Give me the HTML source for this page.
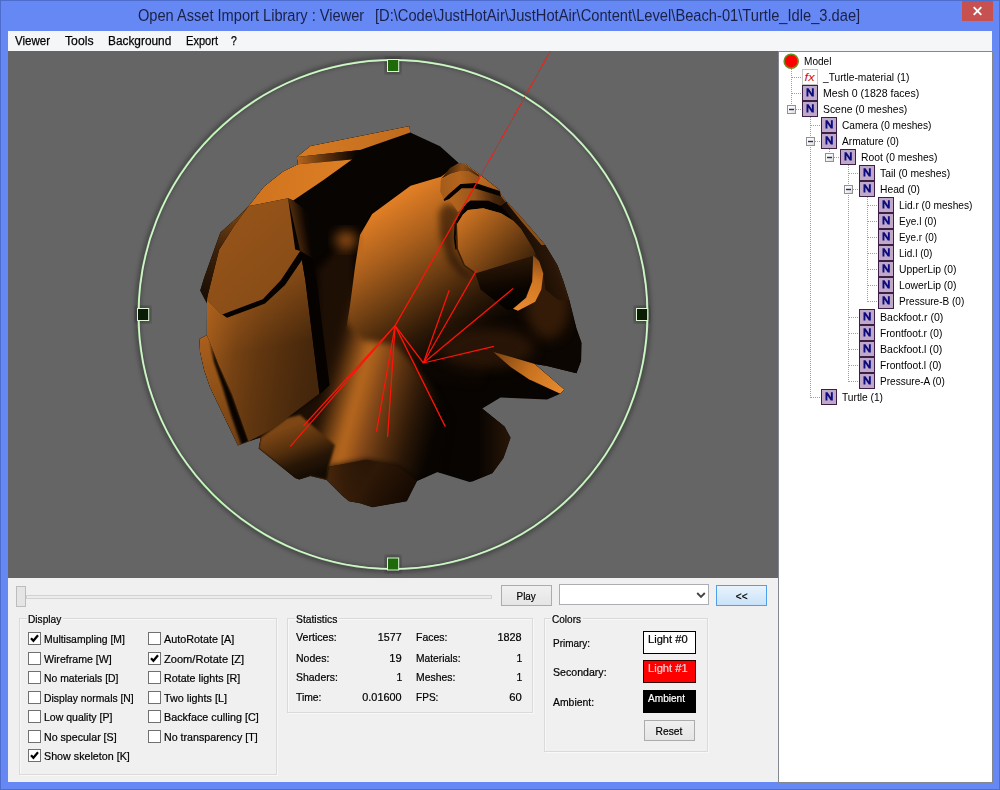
<!DOCTYPE html>
<html><head><meta charset="utf-8"><title>Open Asset Import Library : Viewer</title>
<style>
html,body{margin:0;padding:0;}
body{width:1000px;height:790px;position:relative;overflow:hidden;background:#6588f5;font-family:"Liberation Sans",sans-serif;font-size:11px;color:#000;}
.abs{position:absolute;}
#frame{left:0;top:0;width:998px;height:788px;border:1px solid #4d6dcc;}
.ttl{font-size:16px;line-height:20px;color:#1b2146;}
.mn{-webkit-text-stroke:0.25px;font-size:12.5px;line-height:14px;}
#close{left:962px;top:1px;width:31px;height:20px;background:#c75050;}
#client{left:8px;top:31px;width:984px;height:751px;background:#f0f0f0;}
#menubar{left:8px;top:31px;width:984px;height:20px;background:#f5f6f7;font-size:12px;}
#viewport{left:8px;top:51px;width:770px;height:527px;background:#696969;overflow:hidden;}
#tree{left:778px;top:51px;width:213px;height:730px;background:#fff;border:1px solid #828790;}
.t{position:absolute;white-space:nowrap;line-height:13px;}
.tt{transform:scaleX(0.948);transform-origin:0 0;}
.tp{transform:scaleX(0.95);transform-origin:0 0;}
.tpr{transform:scaleX(0.95);transform-origin:100% 0;}
.gb{box-sizing:border-box;border:1px solid #dadada;box-shadow:inset 1px 1px 0 rgba(255,255,255,.55), 1px 1px 0 rgba(255,255,255,.55);}
.cb{width:13px;height:13px;box-sizing:border-box;border:1px solid #707070;background:#fff;}
.btn{box-sizing:border-box;border:1px solid #acacac;background:linear-gradient(#f0f0f0,#e5e5e5);text-align:center;line-height:19px;}
.btn .tp{transform-origin:50% 0;}
.btn.def{border:1px solid #4ea0ee;background:linear-gradient(#e9f3fc,#c9e2f9);}
.pt{font-size:11.5px;line-height:13px;-webkit-text-stroke:0.22px;}

</style></head>
<body>
<div id="frame" class="abs"></div>
<div class="t ttl" style="left:138.3px;top:9.4px;transform-origin:0 0;transform:scaleX(0.9128)">Open Asset Import Library : Viewer</div>
<div class="t ttl" style="left:374.8px;top:9.4px;transform-origin:0 0;transform:scaleX(0.9179)">[D:\Code\JustHotAir\JustHotAir\Content\Level\Beach-01\Turtle_Idle_3.dae]</div>
<div id="close" class="abs"><svg width="31" height="20" viewBox="0 0 31 20"><path d="M11.7 6.2 L19.3 13.8 M19.3 6.2 L11.7 13.8" stroke="#fff" stroke-width="1.9" fill="none"/></svg></div>
<div id="client" class="abs"></div>
<div id="menubar" class="abs"></div>
<div class="t mn" style="left:15px;top:35px;transform-origin:0 0;transform:scaleX(0.9214)">Viewer</div>
<div class="t mn" style="left:64.5px;top:35px;transform-origin:0 0;transform:scaleX(0.9764)">Tools</div>
<div class="t mn" style="left:107.5px;top:35px;transform-origin:0 0;transform:scaleX(0.9488)">Background</div>
<div class="t mn" style="left:185.5px;top:35px;transform-origin:0 0;transform:scaleX(0.8854)">Export</div>
<div class="t mn" style="left:231.2px;top:35px;transform-origin:0 0;transform:scaleX(0.8342)">?</div>
<div id="viewport" class="abs" style="background:#656565"><svg class="abs" style="left:0;top:0" width="770" height="527" viewBox="8 51 770 527"><defs><clipPath id="sil"><polygon points="296.8,156.9 310.4,145.9 409.6,126.1 410.2,132.6 440.0,146.3 459.2,163.5 464.3,162.9 481.5,175.7 499.7,189.9 500.8,193.9 506.8,202.0 521.0,216.7 545.3,245.0 557.5,265.3 563.5,281.5 569.4,300.3 576.5,328.6 581.5,342.8 581.1,361.0 576.5,373.2 547.1,366.1 534.9,364.0 564.3,389.4 560.3,393.8 547.1,399.5 500.5,397.5 482.3,408.5 504.6,426.6 510.6,437.7 503.5,458.0 492.4,473.2 472.2,481.6 469.6,482.0 437.2,471.9 417.0,481.0 406.8,501.3 372.4,507.3 360.0,503.3 348.9,501.3 341.8,495.2 326.6,480.0 310.4,476.0 299.2,479.4 295.2,478.0 258.7,448.6 260.8,437.5 248.5,441.5 237.9,445.6 210.0,387.5 204.0,370.0 200.0,352.0 199.2,339.1 206.8,335.1 207.0,303.6 200.2,290.5 204.0,278.0 220.3,232.4 237.5,217.2 248.6,206.1 263.8,186.8 283.0,171.6 297.8,164.2"/></clipPath><filter id="b1" color-interpolation-filters="sRGB" x="-20%" y="-20%" width="140%" height="140%"><feGaussianBlur stdDeviation="1.3"/></filter><filter id="b3" color-interpolation-filters="sRGB" x="-20%" y="-20%" width="140%" height="140%"><feGaussianBlur stdDeviation="3"/></filter><filter id="b6" color-interpolation-filters="sRGB" x="-30%" y="-30%" width="160%" height="160%"><feGaussianBlur stdDeviation="6"/></filter><filter id="b05" color-interpolation-filters="sRGB" x="-5%" y="-5%" width="110%" height="110%"><feGaussianBlur stdDeviation="0.45"/></filter><filter id="glow" color-interpolation-filters="sRGB" x="-5%" y="-5%" width="110%" height="110%"><feGaussianBlur stdDeviation="2.2"/></filter><linearGradient id="gBody" gradientUnits="userSpaceOnUse" x1="330" y1="360" x2="445.7" y2="392.2"><stop offset="0" stop-color="#1e0f04"/><stop offset="0.06" stop-color="#2d1807"/><stop offset="0.21" stop-color="#8c4f18"/><stop offset="0.285" stop-color="#b7681f"/><stop offset="0.36" stop-color="#a55d1b"/><stop offset="0.45" stop-color="#86491a"/><stop offset="0.6" stop-color="#5a3210"/><stop offset="0.78" stop-color="#2e1908"/><stop offset="1" stop-color="#080401"/></linearGradient><linearGradient id="gHead" gradientUnits="userSpaceOnUse" x1="370" y1="212" x2="456" y2="347"><stop offset="0" stop-color="#e48026"/><stop offset="0.3" stop-color="#a85e1c"/><stop offset="0.55" stop-color="#6c3d12"/><stop offset="0.8" stop-color="#2e1907"/><stop offset="1" stop-color="#0c0602"/></linearGradient><clipPath id="headclip"><polygon points="300.0,420.0 346.0,330.0 350.0,305.6 355.0,267.0 360.0,235.0 372.2,214.0 410.6,185.8 441.0,176.7 459.2,163.5 464.3,162.9 481.5,175.7 499.7,189.9 506.8,202.0 521.0,216.7 545.3,245.0 557.5,265.3 563.5,281.5 569.4,300.3 576.5,328.6 581.5,342.8 581.1,361.0 576.5,373.2 600.0,420.0 600.0,520.0 300.0,520.0"/></clipPath><linearGradient id="gNeckSh" gradientUnits="userSpaceOnUse" x1="322" y1="300" x2="352" y2="300"><stop offset="0" stop-color="#050200"/><stop offset="1" stop-color="#050200"/></linearGradient><linearGradient id="gFoot1" gradientUnits="userSpaceOnUse" x1="340" y1="462" x2="400" y2="505"><stop offset="0" stop-color="#1e0f04"/><stop offset="0.45" stop-color="#2e1807"/><stop offset="1" stop-color="#160a02"/></linearGradient><linearGradient id="gFoot1b" gradientUnits="userSpaceOnUse" x1="326" y1="480" x2="380" y2="480"><stop offset="0" stop-color="#4a280c"/><stop offset="1" stop-color="rgba(40,20,6,0)"/></linearGradient><linearGradient id="gFoot0" gradientUnits="userSpaceOnUse" x1="280" y1="430" x2="300" y2="482"><stop offset="0" stop-color="#7d4615"/><stop offset="0.4" stop-color="#522e0d"/><stop offset="0.68" stop-color="#281606"/><stop offset="1" stop-color="#120a03"/></linearGradient><linearGradient id="gP1" gradientUnits="userSpaceOnUse" x1="300" y1="150" x2="410" y2="130"><stop offset="0" stop-color="#d67a22"/><stop offset="1" stop-color="#c06c1e"/></linearGradient><linearGradient id="gP1s" gradientUnits="userSpaceOnUse" x1="297" y1="160" x2="355" y2="156"><stop offset="0" stop-color="#b8661c"/><stop offset="0.5" stop-color="#5a300d"/><stop offset="1" stop-color="#0c0501"/></linearGradient><linearGradient id="gP2" gradientUnits="userSpaceOnUse" x1="260" y1="180" x2="340" y2="190"><stop offset="0" stop-color="#d0741f"/><stop offset="1" stop-color="#dc7e24"/></linearGradient><linearGradient id="gP3s" gradientUnits="userSpaceOnUse" x1="288" y1="225" x2="306" y2="222"><stop offset="0" stop-color="#6a3a10"/><stop offset="1" stop-color="#0c0501"/></linearGradient><linearGradient id="gP3" gradientUnits="userSpaceOnUse" x1="222" y1="215" x2="292" y2="290"><stop offset="0" stop-color="#965419"/><stop offset="1" stop-color="#884c17"/></linearGradient><linearGradient id="gP4" gradientUnits="userSpaceOnUse" x1="205" y1="330" x2="320" y2="347"><stop offset="0" stop-color="#a25b1b"/><stop offset="0.1" stop-color="#925218"/><stop offset="0.29" stop-color="#744113"/><stop offset="0.48" stop-color="#623710"/><stop offset="0.66" stop-color="#56300e"/><stop offset="0.87" stop-color="#49290c"/><stop offset="1" stop-color="#44260b"/></linearGradient><linearGradient id="gP4t" gradientUnits="userSpaceOnUse" x1="270" y1="265" x2="285" y2="345"><stop offset="0" stop-color="rgba(185,104,31,0.55)"/><stop offset="0.45" stop-color="rgba(185,104,31,0.3)"/><stop offset="1" stop-color="rgba(185,104,31,0)"/></linearGradient><linearGradient id="gP3l" gradientUnits="userSpaceOnUse" x1="230" y1="215" x2="206" y2="295"><stop offset="0" stop-color="#734013"/><stop offset="0.45" stop-color="#3c210a"/><stop offset="1" stop-color="#1c0f04"/></linearGradient><linearGradient id="gStrip" gradientUnits="userSpaceOnUse" x1="203" y1="340" x2="243" y2="444"><stop offset="0" stop-color="#a85e1c"/><stop offset="0.5" stop-color="#8c4f17"/><stop offset="1" stop-color="#703f13"/></linearGradient><clipPath id="stripclip"><polygon points="199.2,339.1 206.8,335.1 218.4,364.3 232,394.5 248.5,441.5 237.9,445.6 210,387.5 204,370 200,352"/></clipPath><linearGradient id="gBand0" gradientUnits="userSpaceOnUse" x1="445" y1="172" x2="482" y2="176"><stop offset="0" stop-color="#3a1f08"/><stop offset="0.45" stop-color="#8c4f18"/><stop offset="1" stop-color="#321b08"/></linearGradient><linearGradient id="gBrow1" gradientUnits="userSpaceOnUse" x1="441" y1="185" x2="480" y2="178"><stop offset="0" stop-color="#a55c1b"/><stop offset="0.5" stop-color="#b4651d"/><stop offset="1" stop-color="#8c4f18"/></linearGradient><linearGradient id="gBand1" gradientUnits="userSpaceOnUse" x1="452" y1="200" x2="512" y2="200"><stop offset="0" stop-color="#b4651d"/><stop offset="0.38" stop-color="#96541a"/><stop offset="0.7" stop-color="#46260b"/><stop offset="1" stop-color="#2a1607"/></linearGradient><linearGradient id="gRim" gradientUnits="userSpaceOnUse" x1="520" y1="250" x2="560" y2="235"><stop offset="0" stop-color="#140a03"/><stop offset="0.6" stop-color="#2a1607"/><stop offset="1" stop-color="#4a290c"/></linearGradient><linearGradient id="gEyeU" gradientUnits="userSpaceOnUse" x1="462" y1="215" x2="520" y2="275"><stop offset="0" stop-color="#cd7322"/><stop offset="0.45" stop-color="#8c4f17"/><stop offset="1" stop-color="#3a2009"/></linearGradient><linearGradient id="gEyeL" gradientUnits="userSpaceOnUse" x1="500" y1="262" x2="508" y2="310"><stop offset="0" stop-color="#2a1606"/><stop offset="0.6" stop-color="#0a0400"/><stop offset="1" stop-color="#030100"/></linearGradient><linearGradient id="gEyeR" gradientUnits="userSpaceOnUse" x1="540" y1="258" x2="525" y2="312"><stop offset="0" stop-color="#8a4a14"/><stop offset="0.4" stop-color="#d07622"/><stop offset="1" stop-color="#e88a30"/></linearGradient><linearGradient id="gBeak" gradientUnits="userSpaceOnUse" x1="495" y1="352" x2="562" y2="392"><stop offset="0" stop-color="#7a4212"/><stop offset="0.5" stop-color="#c8721f"/><stop offset="1" stop-color="#e88a30"/></linearGradient><linearGradient id="gFlip" gradientUnits="userSpaceOnUse" x1="478" y1="440" x2="512" y2="440"><stop offset="0" stop-color="#080401"/><stop offset="1" stop-color="#2a1607"/></linearGradient></defs><circle cx="393" cy="314.5" r="255.5" fill="none" stroke="#2c2c2c" stroke-opacity="0.55" stroke-width="5" filter="url(#glow)"/>
<rect x="385" y="57" width="16" height="17" fill="#303030" fill-opacity="0.6" filter="url(#glow)"/>
<rect x="385" y="555.5" width="16" height="17" fill="#303030" fill-opacity="0.6" filter="url(#glow)"/>
<rect x="135" y="306" width="16" height="17" fill="#303030" fill-opacity="0.6" filter="url(#glow)"/>
<rect x="634" y="306" width="16" height="17" fill="#303030" fill-opacity="0.6" filter="url(#glow)"/>
<circle cx="393" cy="314.5" r="254.5" fill="none" stroke="#b2e8a8" stroke-width="2.0"/>
<circle cx="393" cy="314.5" r="254.5" fill="none" stroke="#e2fbe0" stroke-width="0.8"/>
<rect x="387.5" y="59.5" width="11.2" height="12" fill="#1e6a0a" stroke="#dcf5d4" stroke-width="1"/>
<rect x="387.5" y="558.0" width="11.2" height="12" fill="#1e6a0a" stroke="#dcf5d4" stroke-width="1"/>
<rect x="137.5" y="308.5" width="11.2" height="12" fill="#0a1c05" stroke="#dcf5d4" stroke-width="1"/>
<rect x="636.5" y="308.5" width="11.2" height="12" fill="#0a1c05" stroke="#dcf5d4" stroke-width="1"/>
<g filter="url(#b05)">
<polygon points="296.8,156.9 310.4,145.9 409.6,126.1 410.2,132.6 440.0,146.3 459.2,163.5 464.3,162.9 481.5,175.7 499.7,189.9 500.8,193.9 506.8,202.0 521.0,216.7 545.3,245.0 557.5,265.3 563.5,281.5 569.4,300.3 576.5,328.6 581.5,342.8 581.1,361.0 576.5,373.2 547.1,366.1 534.9,364.0 564.3,389.4 560.3,393.8 547.1,399.5 500.5,397.5 482.3,408.5 504.6,426.6 510.6,437.7 503.5,458.0 492.4,473.2 472.2,481.6 469.6,482.0 437.2,471.9 417.0,481.0 406.8,501.3 372.4,507.3 360.0,503.3 348.9,501.3 341.8,495.2 326.6,480.0 310.4,476.0 299.2,479.4 295.2,478.0 258.7,448.6 260.8,437.5 248.5,441.5 237.9,445.6 210.0,387.5 204.0,370.0 200.0,352.0 199.2,339.1 206.8,335.1 207.0,303.6 200.2,290.5 204.0,278.0 220.3,232.4 237.5,217.2 248.6,206.1 263.8,186.8 283.0,171.6 297.8,164.2" fill="#080401" />
<g clip-path="url(#sil)">
<g filter="url(#b3)">
<polygon points="318.0,270.0 352.0,235.0 356.0,320.0 395.0,326.0 450.0,420.0 440.0,475.0 417.0,483.0 398.7,466.8 366.3,459.7 340.0,464.8 328.6,466.8 326.6,482.0 310.4,478.0 299.2,481.0 293.0,480.0 256.0,449.0 258.0,436.0 287.0,418.0 319.5,393.4" fill="url(#gBody)" />
</g>
<g clip-path="url(#headclip)"><g filter="url(#b3)">
<polygon points="340.0,300.0 340.0,235.0 372.2,200.0 410.6,175.0 441.0,165.0 459.2,150.0 500.0,160.0 600.0,250.0 600.0,390.0 493.0,352.0 480.0,385.0 430.0,380.0 395.0,345.0 362.0,340.0 345.0,322.0" fill="url(#gHead)" />
</g></g>
<ellipse cx="346" cy="240" rx="11" ry="9" fill="#8a4a14" filter="url(#b6)"/>
<polygon points="340.0,464.8 366.3,459.7 398.7,466.8 417.0,481.0 406.8,501.3 372.4,507.3 360.0,503.3 348.9,501.3 341.8,495.2 326.6,480.0 328.6,466.8" fill="url(#gFoot1)" />
<polygon points="340.0,464.8 366.3,459.7 398.7,466.8 417.0,481.0 406.8,501.3 372.4,507.3 360.0,503.3 348.9,501.3 341.8,495.2 326.6,480.0 328.6,466.8" fill="url(#gFoot1b)" />
<g filter="url(#b1)">
<polygon points="260.8,437.5 258.7,448.6 295.2,478.0 299.2,479.4 310.4,476.0 326.6,480.0 328.6,466.8 335.0,445.0 300.0,415.0 287.0,418.0" fill="url(#gFoot0)" />
</g>
<polygon points="296.8,156.9 310.4,145.9 409.6,126.1 410.2,132.6 360.0,150.0" fill="url(#gP1)" />
<polygon points="296.8,156.9 360.0,150.0 352.0,159.5 297.8,164.2" fill="url(#gP1s)" />
<polygon points="297.8,164.2 352.0,159.5 323.5,180.0 293.2,200.5 288.1,198.2 248.6,206.1 263.8,186.8 283.0,171.6" fill="url(#gP2)" />
<polygon points="288.1,198.2 293.2,200.5 308.0,212.0 312.0,260.0 300.3,251.0" fill="url(#gP3s)" />
<polygon points="248.6,206.1 288.1,198.2 295.2,249.6 300.3,251.0 281.0,281.0 262.8,300.0 222.3,315.0 207.0,300.0 207.5,296.3 211.8,278.9 219.1,249.7 233.7,226.5" fill="url(#gP3)" />
<polygon points="207.0,300.0 222.3,315.0 262.8,300.0 281.0,281.0 300.3,251.0 305.3,280.0 319.5,393.4 287.0,418.0 269.9,430.4 248.5,441.5 232.0,394.5 218.4,364.3 206.8,335.1" fill="url(#gP4)" />
<polygon points="207.0,300.0 222.3,315.0 262.8,300.0 281.0,281.0 300.3,251.0 305.3,280.0 319.5,393.4 287.0,418.0 269.9,430.4 248.5,441.5 232.0,394.5 218.4,364.3 206.8,335.1" fill="url(#gP4t)" />
<polygon points="222.3,314.4 262.8,299.2 281.0,280.0 300.3,250.9 304.0,257.0 285.0,285.0 265.0,303.5 227.0,317.8" fill="#050200" />
<polygon points="248.6,206.1 237.5,217.2 220.3,232.4 204.0,278.0 200.2,290.5 206.0,303.6 207.5,296.3 211.8,278.9 219.1,249.7 233.7,226.5" fill="url(#gP3l)" />
<polygon points="199.2,339.1 206.8,335.1 218.4,364.3 232.0,394.5 248.5,441.5 237.9,445.6 210.0,387.5 204.0,370.0 200.0,352.0" fill="url(#gStrip)" />
<g clip-path="url(#stripclip)"><g filter="url(#b1)">
<polygon points="210.0,341.0 218.4,364.3 232.0,394.5 249.0,441.5 241.5,445.0 231.0,415.0 222.5,387.0 214.0,362.0" fill="#0a0400" />
</g></g>
<polygon points="305.3,280.0 300.3,251.0 312.0,258.0 316.5,280.0 329.6,385.3 319.5,394.4" fill="#050200" />
<polygon points="446,203 462,211 455,226 454,250 463,268 474,277 462,276 449,262 440,236 439,212" fill="#140902" fill-opacity="0.55" filter="url(#b3)"/>
<ellipse cx="548" cy="305" rx="22" ry="34" fill="#3e2109" fill-opacity="0.8" filter="url(#b6)"/>
<ellipse cx="486" cy="348" rx="48" ry="20" fill="#2e1807" fill-opacity="0.85" filter="url(#b6)"/>
<polygon points="441.0,179.0 450.0,168.0 459.2,162.7 463.0,162.7 479.4,175.3 479.4,177.2 468.0,170.9 461.0,170.9 450.3,174.0" fill="url(#gBand0)" />
<polygon points="440.8,179.7 450.3,174.0 461.0,170.9 468.0,170.9 479.4,177.2 475.6,182.9 460.4,183.5 448.4,194.3 444.0,199.4 440.2,191.8" fill="url(#gBrow1)" />
<polygon points="449.0,198.7 461.7,188.0 474.4,188.0 501.0,196.2 506.0,202.5 513.6,215.8 501.0,205.7 488.3,200.6 470.6,200.6 466.8,203.2 458.0,212.0" fill="url(#gBand1)" />
<polygon points="443.6,199.6 448.4,194.6 460.4,183.9 475.6,183.0 499.7,190.9 501.0,196.4 474.4,188.3 461.7,188.3 449.2,199.0 444.2,201.0" fill="#050200" />
<polygon points="466.8,203.2 470.6,200.6 488.3,200.6 501.0,205.7 506.8,202.0 521.0,216.7 523.0,230.0 513.6,220.9 501.0,213.3 483.2,208.2 468.0,210.1 463.0,214.6 456.6,224.7 455.6,238.6 457.2,249.1 455.4,249.5 453.8,238.0 454.6,224.0 460.0,212.0" fill="#050200" />
<polygon points="501.0,205.7 506.8,202.0 521.0,216.7 545.3,245.0 557.5,265.3 563.5,281.5 569.4,300.3 558.0,300.0 545.3,289.6 543.3,273.4 539.2,261.3 533.2,249.1 521.0,228.9 513.6,220.9" fill="url(#gRim)" />
<polygon points="506.8,203.0 510.9,203.5 526.3,220.9 545.3,245.0 541.5,245.0 521.0,220.8" fill="#8c4f18" />
<polygon points="456.6,224.7 463.0,214.6 468.0,210.1 483.2,208.2 501.0,213.3 513.6,220.9 521.0,228.9 533.2,249.1 535.2,255.2 475.4,273.4 464.3,265.3 457.2,249.1" fill="url(#gEyeU)" />
<polyline points="456.2,222.8 457.2,249.1 464.3,265.3 475.4,273.4" fill="none" stroke="#3a1f08" stroke-width="1.6"/>
<polygon points="475.4,273.4 535.2,255.2 532.2,281.5 525.0,297.7 515.0,308.9 506.8,309.9 480.5,289.6" fill="url(#gEyeL)" />
<polygon points="533.2,255.2 539.2,261.3 543.3,273.4 541.3,289.6 535.2,301.8 518.0,310.8 513.0,308.8 526.1,297.7 532.2,281.5" fill="url(#gEyeR)" />
<polygon points="493.4,351.9 534.9,364.0 564.3,389.4 560.3,393.8 528.9,379.2 510.6,367.0" fill="url(#gBeak)" />
<polygon points="482.3,408.5 504.6,426.6 510.6,437.7 503.5,458.0 492.4,473.2 472.2,481.6 460.0,470.0 470.0,420.0" fill="url(#gFlip)" />
</g>
</g>
<g stroke="#ff1408" stroke-width="1.25" fill="none" stroke-linecap="butt">
<line x1="550.4" y1="51" x2="479.5" y2="178" stroke-dasharray="1.4 1.1"/>
<line x1="479.5" y1="178" x2="395.1" y2="325.6" />
<line x1="395.1" y1="325.6" x2="290.1" y2="446.6" />
<line x1="395.1" y1="325.6" x2="303.3" y2="426" />
<line x1="395.1" y1="325.6" x2="376.5" y2="431.6" />
<line x1="395.1" y1="325.6" x2="387.6" y2="436.8" />
<line x1="395.1" y1="325.6" x2="445.3" y2="426.6" />
<line x1="395.1" y1="325.6" x2="423.4" y2="363" />
<line x1="423.4" y1="363" x2="449.2" y2="290.3" />
<line x1="423.4" y1="363" x2="476.5" y2="270.4" />
<line x1="423.4" y1="363" x2="513" y2="288.6" />
<line x1="423.4" y1="363" x2="493.9" y2="346.4" />
</g></svg></div>
<div class="abs" style="left:26px;top:595px;width:466px;height:4px;background:#ececec;border:1px solid #d2d2d2;box-sizing:border-box"></div>
<div class="abs" style="left:16px;top:586px;width:10px;height:21px;box-sizing:border-box;border:1px solid #bcbcbc;background:#e5e5e5"></div>
<div class="abs btn" style="left:501px;top:585px;width:51px;height:21px"></div>
<div class="t pt" style="left:515.11px;top:590px;transform-origin:50% 0;transform:scaleX(0.8626);">Play</div>
<div class="abs" style="left:559px;top:584px;width:150px;height:21px;box-sizing:border-box;border:1px solid #abadb3;background:#fff"><svg class="abs" style="left:136px;top:7px" width="10" height="7" viewBox="0 0 10 7"><path d="M1.2 1 L5 4.8 L8.8 1" stroke="#444" stroke-width="1.9" fill="none"/></svg></div>
<div class="abs btn def" style="left:716px;top:585px;width:51px;height:21px"></div>
<div class="t pt" style="left:734.78px;top:590px;transform-origin:50% 0;transform:scaleX(0.8781);">&lt;&lt;</div>
<div class="abs gb" style="left:19px;top:618px;width:258px;height:157px"></div>
<div class="abs" style="left:26.6px;top:616px;width:36.5px;height:5px;background:#f0f0f0"></div>
<div class="t pt" style="left:27.8px;top:613px;transform-origin:0 0;transform:scaleX(0.8829);">Display</div>
<div class="abs gb" style="left:287px;top:618px;width:246px;height:95px"></div>
<div class="abs" style="left:294.5px;top:616px;width:44.5px;height:5px;background:#f0f0f0"></div>
<div class="t pt" style="left:295.7px;top:613px;transform-origin:0 0;transform:scaleX(0.8975);">Statistics</div>
<div class="abs gb" style="left:544px;top:618px;width:164px;height:134px"></div>
<div class="abs" style="left:551.2px;top:616px;width:32.2px;height:5px;background:#f0f0f0"></div>
<div class="t pt" style="left:552.4000000000001px;top:613px;transform-origin:0 0;transform:scaleX(0.8726);">Colors</div>
<div class="abs cb" style="left:28px;top:632px"><svg width="11" height="11" viewBox="0 0 11 11" style="position:absolute;left:0;top:0"><path d="M2 5.2 L4.4 7.8 L9 2.2" stroke="#000" stroke-width="2.2" fill="none"/></svg></div>
<div class="t pt" style="left:44.3px;top:633px;transform-origin:0 0;transform:scaleX(0.9031);">Multisampling [M]</div>
<div class="abs cb" style="left:28px;top:652px"></div>
<div class="t pt" style="left:44.3px;top:653px;transform-origin:0 0;transform:scaleX(0.9226);">Wireframe [W]</div>
<div class="abs cb" style="left:28px;top:671px"></div>
<div class="t pt" style="left:44.3px;top:672px;transform-origin:0 0;transform:scaleX(0.9025);">No materials [D]</div>
<div class="abs cb" style="left:28px;top:691px"></div>
<div class="t pt" style="left:44.3px;top:692px;transform-origin:0 0;transform:scaleX(0.8997);">Display normals [N]</div>
<div class="abs cb" style="left:28px;top:710px"></div>
<div class="t pt" style="left:44.3px;top:711px;transform-origin:0 0;transform:scaleX(0.9145);">Low quality [P]</div>
<div class="abs cb" style="left:28px;top:730px"></div>
<div class="t pt" style="left:44.3px;top:731px;transform-origin:0 0;transform:scaleX(0.9234);">No specular [S]</div>
<div class="abs cb" style="left:28px;top:749px"><svg width="11" height="11" viewBox="0 0 11 11" style="position:absolute;left:0;top:0"><path d="M2 5.2 L4.4 7.8 L9 2.2" stroke="#000" stroke-width="2.2" fill="none"/></svg></div>
<div class="t pt" style="left:44.3px;top:750px;transform-origin:0 0;transform:scaleX(0.9320);">Show skeleton [K]</div>
<div class="abs cb" style="left:148px;top:632px"></div>
<div class="t pt" style="left:164.3px;top:633px;transform-origin:0 0;transform:scaleX(0.9385);">AutoRotate [A]</div>
<div class="abs cb" style="left:148px;top:652px"><svg width="11" height="11" viewBox="0 0 11 11" style="position:absolute;left:0;top:0"><path d="M2 5.2 L4.4 7.8 L9 2.2" stroke="#000" stroke-width="2.2" fill="none"/></svg></div>
<div class="t pt" style="left:164.3px;top:653px;transform-origin:0 0;transform:scaleX(0.9640);">Zoom/Rotate [Z]</div>
<div class="abs cb" style="left:148px;top:671px"></div>
<div class="t pt" style="left:164.3px;top:672px;transform-origin:0 0;transform:scaleX(0.9312);">Rotate lights [R]</div>
<div class="abs cb" style="left:148px;top:691px"></div>
<div class="t pt" style="left:164.3px;top:692px;transform-origin:0 0;transform:scaleX(0.9371);">Two lights [L]</div>
<div class="abs cb" style="left:148px;top:710px"></div>
<div class="t pt" style="left:164.3px;top:711px;transform-origin:0 0;transform:scaleX(0.9376);">Backface culling [C]</div>
<div class="abs cb" style="left:148px;top:730px"></div>
<div class="t pt" style="left:164.3px;top:731px;transform-origin:0 0;transform:scaleX(0.9269);">No transparency [T]</div>
<div class="t pt" style="left:296.1px;top:631px;transform-origin:0 0;transform:scaleX(0.9250);">Vertices:</div>
<div class="t pt" style="left:376.41px;top:631px;transform-origin:100% 0;transform:scaleX(0.9299);">1577</div>
<div class="t pt" style="left:416.3px;top:631px;transform-origin:0 0;transform:scaleX(0.9126);">Faces:</div>
<div class="t pt" style="left:496.41px;top:631px;transform-origin:100% 0;transform:scaleX(0.9455);">1828</div>
<div class="t pt" style="left:296.1px;top:652px;transform-origin:0 0;transform:scaleX(0.9139);">Nodes:</div>
<div class="t pt" style="left:389.20px;top:652px;transform-origin:100% 0;transform:scaleX(0.9768);">19</div>
<div class="t pt" style="left:416.3px;top:652px;transform-origin:0 0;transform:scaleX(0.8925);">Materials:</div>
<div class="t pt" style="left:515.59px;top:652px;transform-origin:100% 0;transform:scaleX(0.9054);">1</div>
<div class="t pt" style="left:296.1px;top:671px;transform-origin:0 0;transform:scaleX(0.9081);">Shaders:</div>
<div class="t pt" style="left:395.59px;top:671px;transform-origin:100% 0;transform:scaleX(0.9054);">1</div>
<div class="t pt" style="left:416.3px;top:671px;transform-origin:0 0;transform:scaleX(0.9041);">Meshes:</div>
<div class="t pt" style="left:515.59px;top:671px;transform-origin:100% 0;transform:scaleX(0.9054);">1</div>
<div class="t pt" style="left:296.1px;top:691px;transform-origin:0 0;transform:scaleX(0.9002);">Time:</div>
<div class="t pt" style="left:360.42px;top:691px;transform-origin:100% 0;transform:scaleX(0.9452);">0.01600</div>
<div class="t pt" style="left:416.3px;top:691px;transform-origin:0 0;transform:scaleX(0.8763);">FPS:</div>
<div class="t pt" style="left:509.20px;top:691px;transform-origin:100% 0;transform:scaleX(0.9768);">60</div>
<div class="t pt" style="left:553.2px;top:637px;transform-origin:0 0;transform:scaleX(0.8666);">Primary:</div>
<div class="t pt" style="left:553.2px;top:666px;transform-origin:0 0;transform:scaleX(0.9212);">Secondary:</div>
<div class="t pt" style="left:553.2px;top:696px;transform-origin:0 0;transform:scaleX(0.9055);">Ambient:</div>
<div class="abs" style="left:643px;top:631px;width:53px;height:23px;box-sizing:border-box;border:1px solid #000;background:#fff"></div>
<div class="t pt" style="left:647.5px;top:633px;transform-origin:0 0;transform:scaleX(0.9673);">Light #0</div>
<div class="abs" style="left:643px;top:660px;width:53px;height:23px;box-sizing:border-box;border:1px solid #300;background:#ff0000"></div>
<div class="t pt" style="left:647.5px;top:662px;transform-origin:0 0;transform:scaleX(0.9673);color:#e6d2d8">Light #1</div>
<div class="abs" style="left:643px;top:690px;width:53px;height:23px;box-sizing:border-box;border:1px solid #000;background:#000"></div>
<div class="t pt" style="left:647.5px;top:692px;transform-origin:0 0;transform:scaleX(0.8770);color:#fff">Ambient</div>
<div class="abs btn" style="left:644px;top:720px;width:51px;height:21px"></div>
<div class="t pt" style="left:653.98px;top:725px;transform-origin:50% 0;transform:scaleX(0.8919);">Reset</div>
<div id="tree" class="abs">
<svg class="abs" style="left:0;top:0" width="212" height="729" viewBox="779 52 212 729" shape-rendering="crispEdges"><defs><linearGradient id="exg" x1="0" y1="0" x2="1" y2="1"><stop offset="0" stop-color="#fff"/><stop offset="0.5" stop-color="#f4f4f4"/><stop offset="1" stop-color="#d8d8d8"/></linearGradient></defs>
<path d="M791.5 77.5 H802" stroke="#a0a0a0" stroke-width="1" stroke-dasharray="1 1" fill="none"/>
<path d="M791.5 93.5 H802" stroke="#a0a0a0" stroke-width="1" stroke-dasharray="1 1" fill="none"/>
<path d="M791.5 109.5 H802" stroke="#a0a0a0" stroke-width="1" stroke-dasharray="1 1" fill="none"/>
<path d="M810.5 125.5 H821" stroke="#a0a0a0" stroke-width="1" stroke-dasharray="1 1" fill="none"/>
<path d="M810.5 141.5 H821" stroke="#a0a0a0" stroke-width="1" stroke-dasharray="1 1" fill="none"/>
<path d="M829.5 157.5 H840" stroke="#a0a0a0" stroke-width="1" stroke-dasharray="1 1" fill="none"/>
<path d="M848.5 173.5 H859" stroke="#a0a0a0" stroke-width="1" stroke-dasharray="1 1" fill="none"/>
<path d="M848.5 189.5 H859" stroke="#a0a0a0" stroke-width="1" stroke-dasharray="1 1" fill="none"/>
<path d="M867.5 205.5 H878" stroke="#a0a0a0" stroke-width="1" stroke-dasharray="1 1" fill="none"/>
<path d="M867.5 221.5 H878" stroke="#a0a0a0" stroke-width="1" stroke-dasharray="1 1" fill="none"/>
<path d="M867.5 237.5 H878" stroke="#a0a0a0" stroke-width="1" stroke-dasharray="1 1" fill="none"/>
<path d="M867.5 253.5 H878" stroke="#a0a0a0" stroke-width="1" stroke-dasharray="1 1" fill="none"/>
<path d="M867.5 269.5 H878" stroke="#a0a0a0" stroke-width="1" stroke-dasharray="1 1" fill="none"/>
<path d="M867.5 285.5 H878" stroke="#a0a0a0" stroke-width="1" stroke-dasharray="1 1" fill="none"/>
<path d="M867.5 301.5 H878" stroke="#a0a0a0" stroke-width="1" stroke-dasharray="1 1" fill="none"/>
<path d="M848.5 317.5 H859" stroke="#a0a0a0" stroke-width="1" stroke-dasharray="1 1" fill="none"/>
<path d="M848.5 333.5 H859" stroke="#a0a0a0" stroke-width="1" stroke-dasharray="1 1" fill="none"/>
<path d="M848.5 349.5 H859" stroke="#a0a0a0" stroke-width="1" stroke-dasharray="1 1" fill="none"/>
<path d="M848.5 365.5 H859" stroke="#a0a0a0" stroke-width="1" stroke-dasharray="1 1" fill="none"/>
<path d="M848.5 381.5 H859" stroke="#a0a0a0" stroke-width="1" stroke-dasharray="1 1" fill="none"/>
<path d="M810.5 397.5 H821" stroke="#a0a0a0" stroke-width="1" stroke-dasharray="1 1" fill="none"/>
<path d="M791.5 69 V110" stroke="#a0a0a0" stroke-width="1" stroke-dasharray="1 1" fill="none"/>
<path d="M810.5 117 V398" stroke="#a0a0a0" stroke-width="1" stroke-dasharray="1 1" fill="none"/>
<path d="M829.5 149 V158" stroke="#a0a0a0" stroke-width="1" stroke-dasharray="1 1" fill="none"/>
<path d="M848.5 165 V382" stroke="#a0a0a0" stroke-width="1" stroke-dasharray="1 1" fill="none"/>
<path d="M867.5 197 V302" stroke="#a0a0a0" stroke-width="1" stroke-dasharray="1 1" fill="none"/>
<circle cx="791.2" cy="61.2" r="7" fill="#ff0000" stroke="#6b8e23" stroke-width="1.6" shape-rendering="auto"/>
<rect x="802.5" y="69.5" width="15" height="15" fill="#fff" stroke="#c8c8c8"/>
<text x="804.6" y="81" font-family="Liberation Sans" font-style="italic" font-size="11.5" fill="#c41420" shape-rendering="auto" textLength="10" lengthAdjust="spacingAndGlyphs">fx</text>
<rect x="802.5" y="85.5" width="15" height="15" fill="#c0a8c8" stroke="#3c1e46"/>
<path d="M806.5 96.6 V88.3 H808.5 L811.9 93.3 V88.3 H813.8 V96.6 H811.8 L808.4 91.6 V96.6 Z" fill="#0c0c80" shape-rendering="auto"/>
<rect x="802.5" y="101.5" width="15" height="15" fill="#c0a8c8" stroke="#3c1e46"/>
<path d="M806.5 112.6 V104.3 H808.5 L811.9 109.3 V104.3 H813.8 V112.6 H811.8 L808.4 107.6 V112.6 Z" fill="#0c0c80" shape-rendering="auto"/>
<rect x="787.5" y="105.5" width="8" height="8" fill="url(#exg)" stroke="#919191"/>
<rect x="789" y="108.8" width="5" height="1.4" fill="#262e6a" shape-rendering="auto"/>
<rect x="821.5" y="117.5" width="15" height="15" fill="#c0a8c8" stroke="#3c1e46"/>
<path d="M825.5 128.6 V120.3 H827.5 L830.9 125.3 V120.3 H832.8 V128.6 H830.8 L827.4 123.6 V128.6 Z" fill="#0c0c80" shape-rendering="auto"/>
<rect x="821.5" y="133.5" width="15" height="15" fill="#c0a8c8" stroke="#3c1e46"/>
<path d="M825.5 144.6 V136.3 H827.5 L830.9 141.3 V136.3 H832.8 V144.6 H830.8 L827.4 139.6 V144.6 Z" fill="#0c0c80" shape-rendering="auto"/>
<rect x="806.5" y="137.5" width="8" height="8" fill="url(#exg)" stroke="#919191"/>
<rect x="808" y="140.8" width="5" height="1.4" fill="#262e6a" shape-rendering="auto"/>
<rect x="840.5" y="149.5" width="15" height="15" fill="#c0a8c8" stroke="#3c1e46"/>
<path d="M844.5 160.6 V152.3 H846.5 L849.9 157.3 V152.3 H851.8 V160.6 H849.8 L846.4 155.6 V160.6 Z" fill="#0c0c80" shape-rendering="auto"/>
<rect x="825.5" y="153.5" width="8" height="8" fill="url(#exg)" stroke="#919191"/>
<rect x="827" y="156.8" width="5" height="1.4" fill="#262e6a" shape-rendering="auto"/>
<rect x="859.5" y="165.5" width="15" height="15" fill="#c0a8c8" stroke="#3c1e46"/>
<path d="M863.5 176.6 V168.3 H865.5 L868.9 173.3 V168.3 H870.8 V176.6 H868.8 L865.4 171.6 V176.6 Z" fill="#0c0c80" shape-rendering="auto"/>
<rect x="859.5" y="181.5" width="15" height="15" fill="#c0a8c8" stroke="#3c1e46"/>
<path d="M863.5 192.6 V184.3 H865.5 L868.9 189.3 V184.3 H870.8 V192.6 H868.8 L865.4 187.6 V192.6 Z" fill="#0c0c80" shape-rendering="auto"/>
<rect x="844.5" y="185.5" width="8" height="8" fill="url(#exg)" stroke="#919191"/>
<rect x="846" y="188.8" width="5" height="1.4" fill="#262e6a" shape-rendering="auto"/>
<rect x="878.5" y="197.5" width="15" height="15" fill="#c0a8c8" stroke="#3c1e46"/>
<path d="M882.5 208.6 V200.3 H884.5 L887.9 205.3 V200.3 H889.8 V208.6 H887.8 L884.4 203.6 V208.6 Z" fill="#0c0c80" shape-rendering="auto"/>
<rect x="878.5" y="213.5" width="15" height="15" fill="#c0a8c8" stroke="#3c1e46"/>
<path d="M882.5 224.6 V216.3 H884.5 L887.9 221.3 V216.3 H889.8 V224.6 H887.8 L884.4 219.6 V224.6 Z" fill="#0c0c80" shape-rendering="auto"/>
<rect x="878.5" y="229.5" width="15" height="15" fill="#c0a8c8" stroke="#3c1e46"/>
<path d="M882.5 240.6 V232.3 H884.5 L887.9 237.3 V232.3 H889.8 V240.6 H887.8 L884.4 235.6 V240.6 Z" fill="#0c0c80" shape-rendering="auto"/>
<rect x="878.5" y="245.5" width="15" height="15" fill="#c0a8c8" stroke="#3c1e46"/>
<path d="M882.5 256.6 V248.3 H884.5 L887.9 253.3 V248.3 H889.8 V256.6 H887.8 L884.4 251.6 V256.6 Z" fill="#0c0c80" shape-rendering="auto"/>
<rect x="878.5" y="261.5" width="15" height="15" fill="#c0a8c8" stroke="#3c1e46"/>
<path d="M882.5 272.6 V264.3 H884.5 L887.9 269.3 V264.3 H889.8 V272.6 H887.8 L884.4 267.6 V272.6 Z" fill="#0c0c80" shape-rendering="auto"/>
<rect x="878.5" y="277.5" width="15" height="15" fill="#c0a8c8" stroke="#3c1e46"/>
<path d="M882.5 288.6 V280.3 H884.5 L887.9 285.3 V280.3 H889.8 V288.6 H887.8 L884.4 283.6 V288.6 Z" fill="#0c0c80" shape-rendering="auto"/>
<rect x="878.5" y="293.5" width="15" height="15" fill="#c0a8c8" stroke="#3c1e46"/>
<path d="M882.5 304.6 V296.3 H884.5 L887.9 301.3 V296.3 H889.8 V304.6 H887.8 L884.4 299.6 V304.6 Z" fill="#0c0c80" shape-rendering="auto"/>
<rect x="859.5" y="309.5" width="15" height="15" fill="#c0a8c8" stroke="#3c1e46"/>
<path d="M863.5 320.6 V312.3 H865.5 L868.9 317.3 V312.3 H870.8 V320.6 H868.8 L865.4 315.6 V320.6 Z" fill="#0c0c80" shape-rendering="auto"/>
<rect x="859.5" y="325.5" width="15" height="15" fill="#c0a8c8" stroke="#3c1e46"/>
<path d="M863.5 336.6 V328.3 H865.5 L868.9 333.3 V328.3 H870.8 V336.6 H868.8 L865.4 331.6 V336.6 Z" fill="#0c0c80" shape-rendering="auto"/>
<rect x="859.5" y="341.5" width="15" height="15" fill="#c0a8c8" stroke="#3c1e46"/>
<path d="M863.5 352.6 V344.3 H865.5 L868.9 349.3 V344.3 H870.8 V352.6 H868.8 L865.4 347.6 V352.6 Z" fill="#0c0c80" shape-rendering="auto"/>
<rect x="859.5" y="357.5" width="15" height="15" fill="#c0a8c8" stroke="#3c1e46"/>
<path d="M863.5 368.6 V360.3 H865.5 L868.9 365.3 V360.3 H870.8 V368.6 H868.8 L865.4 363.6 V368.6 Z" fill="#0c0c80" shape-rendering="auto"/>
<rect x="859.5" y="373.5" width="15" height="15" fill="#c0a8c8" stroke="#3c1e46"/>
<path d="M863.5 384.6 V376.3 H865.5 L868.9 381.3 V376.3 H870.8 V384.6 H868.8 L865.4 379.6 V384.6 Z" fill="#0c0c80" shape-rendering="auto"/>
<rect x="821.5" y="389.5" width="15" height="15" fill="#c0a8c8" stroke="#3c1e46"/>
<path d="M825.5 400.6 V392.3 H827.5 L830.9 397.3 V392.3 H832.8 V400.6 H830.8 L827.4 395.6 V400.6 Z" fill="#0c0c80" shape-rendering="auto"/>
</svg>
<div class="t" style="left:25.3px;top:2.5px;transform-origin:0 0;transform:scaleX(0.9143)">Model</div>
<div class="t" style="left:44.3px;top:18.5px;transform-origin:0 0;transform:scaleX(0.9278)">_Turtle-material (1)</div>
<div class="t" style="left:44.3px;top:34.5px;transform-origin:0 0;transform:scaleX(0.9603)">Mesh 0 (1828 faces)</div>
<div class="t" style="left:44.3px;top:50.5px;transform-origin:0 0;transform:scaleX(0.9444)">Scene (0 meshes)</div>
<div class="t" style="left:63.3px;top:66.5px;transform-origin:0 0;transform:scaleX(0.9197)">Camera (0 meshes)</div>
<div class="t" style="left:63.3px;top:82.5px;transform-origin:0 0;transform:scaleX(0.9231)">Armature (0)</div>
<div class="t" style="left:82.3px;top:98.5px;transform-origin:0 0;transform:scaleX(0.9408)">Root (0 meshes)</div>
<div class="t" style="left:101.3px;top:114.5px;transform-origin:0 0;transform:scaleX(0.9413)">Tail (0 meshes)</div>
<div class="t" style="left:101.3px;top:130.5px;transform-origin:0 0;transform:scaleX(0.9346)">Head (0)</div>
<div class="t" style="left:120.3px;top:146.5px;transform-origin:0 0;transform:scaleX(0.9247)">Lid.r (0 meshes)</div>
<div class="t" style="left:120.3px;top:162.5px;transform-origin:0 0;transform:scaleX(0.9153)">Eye.l (0)</div>
<div class="t" style="left:120.3px;top:178.5px;transform-origin:0 0;transform:scaleX(0.9007)">Eye.r (0)</div>
<div class="t" style="left:120.3px;top:194.5px;transform-origin:0 0;transform:scaleX(0.9104)">Lid.l (0)</div>
<div class="t" style="left:120.3px;top:210.5px;transform-origin:0 0;transform:scaleX(0.9405)">UpperLip (0)</div>
<div class="t" style="left:120.3px;top:226.5px;transform-origin:0 0;transform:scaleX(0.9405)">LowerLip (0)</div>
<div class="t" style="left:120.3px;top:242.5px;transform-origin:0 0;transform:scaleX(0.9129)">Pressure-B (0)</div>
<div class="t" style="left:101.3px;top:258.5px;transform-origin:0 0;transform:scaleX(0.9586)">Backfoot.r (0)</div>
<div class="t" style="left:101.3px;top:274.5px;transform-origin:0 0;transform:scaleX(0.9264)">Frontfoot.r (0)</div>
<div class="t" style="left:101.3px;top:290.5px;transform-origin:0 0;transform:scaleX(0.9612)">Backfoot.l (0)</div>
<div class="t" style="left:101.3px;top:306.5px;transform-origin:0 0;transform:scaleX(0.9314)">Frontfoot.l (0)</div>
<div class="t" style="left:101.3px;top:322.5px;transform-origin:0 0;transform:scaleX(0.9137)">Pressure-A (0)</div>
<div class="t" style="left:63.3px;top:338.5px;transform-origin:0 0;transform:scaleX(0.9272)">Turtle (1)</div>
</div>
</body></html>
